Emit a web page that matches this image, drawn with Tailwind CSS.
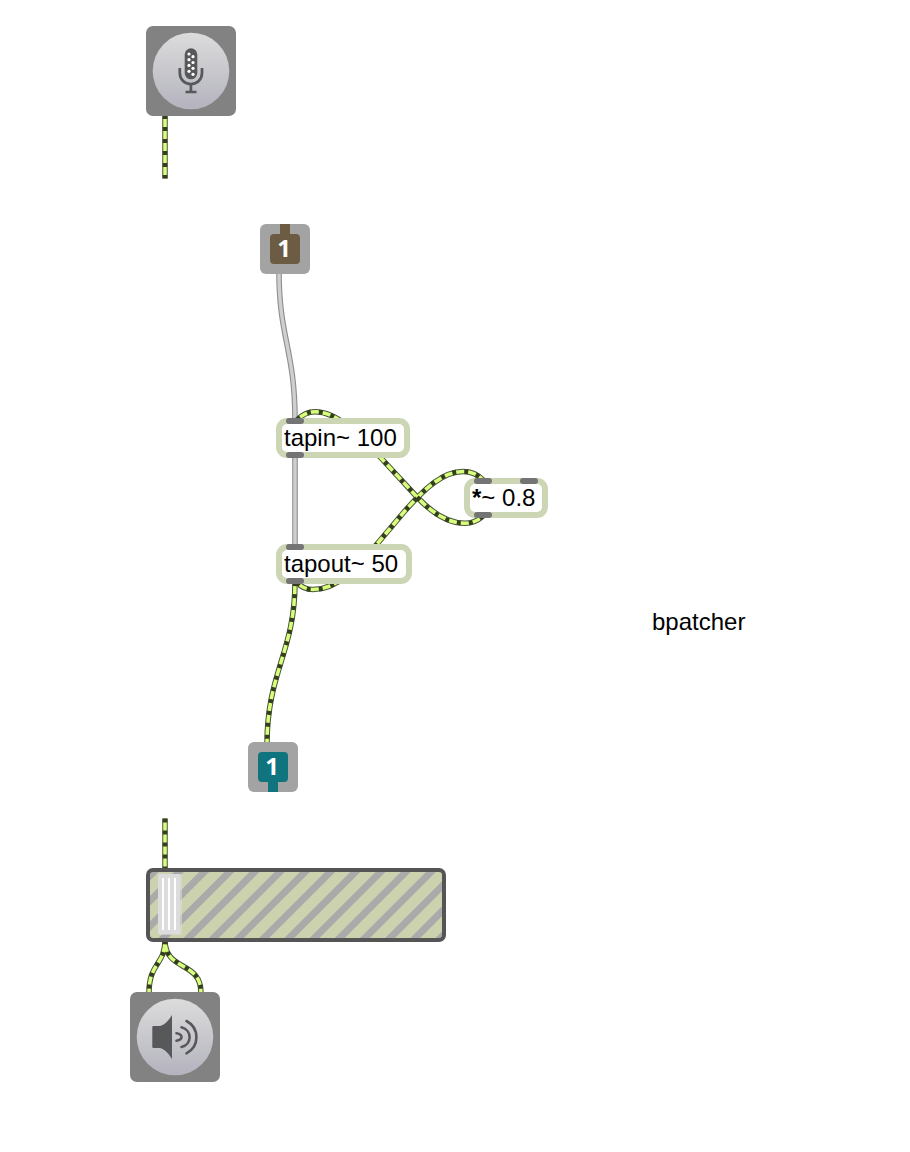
<!DOCTYPE html>
<html lang="en">
<head>
<meta charset="utf-8">
<title>Patcher</title>
<script src="https://cdn.jsdelivr.net/npm/@tailwindcss/browser@4"></script>
</head>
<body class="bg-white">
<main class="relative h-[1152px] w-[910px] overflow-hidden bg-white font-['Liberation_Sans',Arial,sans-serif] text-black">

  <!-- patch cords -->
  <svg class="absolute inset-0" width="910" height="1152" fill="none">
    <defs>
      <path id="c1" d="M165 115V178.500"/>
      <path id="c2" d="M295 582C295 652 267 672 267 744"/>
      <path id="c3" d="M165 818.500V870"/>
      <path id="c4" d="M165 940C165 966 149 962 149 993"/>
      <path id="c5" d="M165 940C165 972 201 960 201 993"/>
      <path id="c6" d="M483 516Q475 523.300 465 523.300C447 523.300 432 513 417 497L381 458C365 441 340 411.700 315 411.700Q305 411.700 297 420"/>
      <path id="c7" d="M297 582Q303 589.600 313 589.600C340 589.600 361 563 377 544L404 512C425 488 443 471.500 463 471.500Q475 471.500 483 480"/>
    </defs>
    <g stroke="#8e8e8e" stroke-width="5.600">
      <path d="M279 272C279 338 295 350 295 420M295 456V546"/>
      <path d="M279 272C279 338 295 350 295 420M295 456V546" stroke="#cfcfcf" stroke-width="3.400"/>
    </g>
    <g stroke="#4a5438" stroke-width="5.500">
      <use href="#c1"/><use href="#c2"/><use href="#c3"/><use href="#c4"/><use href="#c5"/><use href="#c6"/><use href="#c7"/>
    </g>
    <g stroke="#d8ff7c" stroke-width="3.500">
      <use href="#c1"/><use href="#c2"/><use href="#c3"/><use href="#c4"/><use href="#c5"/><use href="#c6"/><use href="#c7"/>
    </g>
    <g stroke="#353f20" stroke-width="4.600" stroke-dasharray="4 8">
      <use href="#c1"/><use href="#c2"/><use href="#c3"/><use href="#c4"/><use href="#c5"/><use href="#c6"/><use href="#c7"/>
    </g>
  </svg>

  <!-- ezadc~ -->
  <svg class="absolute left-[146px] top-[26px]" width="90" height="90" fill="none">
    <defs><linearGradient id="g" x1="0" y1="0" x2="0" y2="1"><stop stop-color="#dcdcdc"/><stop offset="1" stop-color="#b4b3be"/></linearGradient></defs>
    <rect width="90" height="90" rx="7" fill="#828282"/>
    <circle cx="45" cy="45" r="38.300" fill="url(#g)"/>
    <rect x="38.700" y="22.300" width="12.600" height="31" rx="6.300" fill="#57585a"/>
    <path d="M33.800 42V47C33.800 53.500 38.800 58 44.900 58S56 53.500 56 47V42M44.900 58V66M39.500 66H50.500" stroke="#57585a" stroke-width="2.700"/>
    <g fill="#fff"><circle cx="43" cy="28" r="1.600"/><circle cx="47" cy="30.700" r="1.600"/><circle cx="43" cy="33.700" r="1.600"/><circle cx="47" cy="36.500" r="1.600"/><circle cx="43" cy="39.400" r="1.600"/><circle cx="47" cy="42.300" r="1.600"/><circle cx="43" cy="45.300" r="1.600"/><circle cx="47" cy="48.300" r="1.600"/></g>
  </svg>

  <!-- inlet -->
  <div class="absolute left-[260px] top-[224px] flex size-[50px] items-center justify-center rounded-[6px] bg-[#a3a3a3]">
    <span class="absolute left-5 top-0 h-3 w-2.5 bg-[#6b5c43]"></span>
    <div class="flex size-[30px] items-center justify-center rounded-[4px] bg-[#6b5c43] pr-0.5 pb-[3px] font-['Open_Sans',sans-serif] text-[24px] font-bold leading-none text-white">1</div>
  </div>

  <!-- objects -->
  <div class="absolute left-[276px] top-[418px] flex h-10 w-[134px] items-center rounded-[11px] border-6 border-[#ccd5b4] bg-white pl-0.5 text-[24px] leading-none whitespace-nowrap">
    <span class="absolute -top-[6px] left-1 h-1.5 w-[18px] rounded-[3px] bg-[#747474]"></span>
    <span class="absolute -bottom-[6px] left-1 h-1.5 w-[18px] rounded-[3px] bg-[#747474]"></span>
    <span>tapin~ 100</span>
  </div>
  <div class="absolute left-[464px] top-[478px] flex h-10 w-[84px] items-center rounded-[11px] border-6 border-[#ccd5b4] bg-white pl-0.5 text-[24px] leading-none whitespace-nowrap">
    <span class="absolute -top-[6px] left-1 h-1.5 w-[18px] rounded-[3px] bg-[#747474]"></span>
    <span class="absolute -top-[6px] left-[50px] h-1.5 w-[18px] rounded-[3px] bg-[#747474]"></span>
    <span class="absolute -bottom-[6px] left-1 h-1.5 w-[18px] rounded-[3px] bg-[#747474]"></span>
    <span><span class="font-bold">*</span>~ 0.8</span>
  </div>
  <div class="absolute left-[276px] top-[544px] flex h-10 w-[136px] items-center rounded-[11px] border-6 border-[#ccd5b4] bg-white pl-0.5 text-[24px] leading-none whitespace-nowrap">
    <span class="absolute -top-[6px] left-1 h-1.5 w-[18px] rounded-[3px] bg-[#747474]"></span>
    <span class="absolute -bottom-[6px] left-1 h-1.5 w-[18px] rounded-[3px] bg-[#747474]"></span>
    <span>tapout~ 50</span>
  </div>
  <p class="absolute left-[652px] top-[610px] text-[24px] leading-none">bpatcher</p>

  <!-- outlet -->
  <div class="absolute left-[248px] top-[742px] flex size-[50px] items-center justify-center rounded-[6px] bg-[#a3a3a3]">
    <span class="absolute bottom-0 left-5 h-3 w-2.5 bg-[#10747f]"></span>
    <div class="flex size-[30px] items-center justify-center rounded-[4px] bg-[#10747f] pr-0.5 pb-[3px] font-['Open_Sans',sans-serif] text-[24px] font-bold leading-none text-white">1</div>
  </div>

  <!-- gain~ -->
  <svg class="absolute left-[146px] top-[868px]" width="300" height="74" fill="none">
    <defs><clipPath id="k"><rect x="2" y="2" width="296" height="70" rx="5"/></clipPath></defs>
    <rect x="2" y="2" width="296" height="70" rx="5" fill="#ccd2ae"/>
    <path clip-path="url(#k)" stroke="#aaaaaa" stroke-width="7" d="M-68.300 80l80-80M-43.100 80l80-80M-17.900 80l80-80M7.300 80l80-80M32.500 80l80-80M57.700 80l80-80M82.900 80l80-80M108.100 80l80-80M133.300 80l80-80M158.500 80l80-80M183.700 80l80-80M208.900 80l80-80M234.100 80l80-80M259.300 80l80-80M284.500 80l80-80"/>
    <rect x="2" y="2" width="296" height="70" rx="5" stroke="#555555" stroke-width="4"/>
    <rect x="14" y="6" width="22" height="61" fill="#dcdcdc" fill-opacity=".6"/>
    <rect x="12" y="6" width="22" height="60" fill="#dcdcdc"/>
    <path d="M17 10V62M23 10V62M29 10V62" stroke="#fff" stroke-width="2"/>
  </svg>

  <!-- ezdac~ -->
  <svg class="absolute left-[130px] top-[992px]" width="90" height="90" fill="none">
    <rect width="90" height="90" rx="7" fill="#828282"/>
    <circle cx="45" cy="45" r="38.300" fill="url(#g)"/>
    <path d="M23.500 34H30C34.500 33 39 28 42 23V67C39 62 34.500 57 30 56H23.500Q22.300 56 22.300 55V35Q22.300 34 23.500 34Z" fill="#57585a"/>
    <g stroke="#57585a" stroke-width="2.600" stroke-linecap="round"><path d="M46.500 41.300Q51.500 42 51.500 45T46.500 48.700"/><path d="M51.500 35.300C62.300 38 62.300 52.500 51.500 55"/><path d="M56.500 29C69.700 36 69.700 54.500 56.500 61.300"/></g>
  </svg>
</main>
</body>
</html>
